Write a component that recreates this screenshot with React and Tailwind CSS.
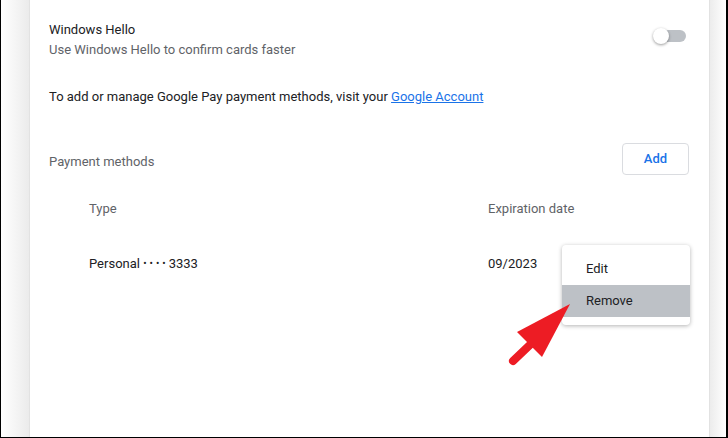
import React from 'react';

const Toggle = () => (
  <div className="relative w-[34px] h-[20px] flex items-center">
    <div className="ml-[3px] w-[30px] h-[12px] rounded-full bg-[#bdc1c6]" />
    <div className="absolute left-0 top-[2px] w-[16px] h-[16px] rounded-full bg-white shadow-[0_1px_3px_rgba(0,0,0,0.4)]" />
  </div>
);

const RowMenu = () => (
  <div className="absolute left-[561px] top-[245px] w-[128px] py-[8px] bg-white rounded-[4px] shadow-[0_1px_4px_rgba(0,0,0,0.3)] text-[13px] text-[#202124]">
    <div className="h-[32px] flex items-center pl-[24px]">Edit</div>
    <div className="h-[32px] flex items-center pl-[24px] bg-[#bdc1c6]">Remove</div>
  </div>
);

const Arrow = () => (
  <svg className="absolute left-0 top-0 pointer-events-none" width="728" height="438">
    <line x1="512" y1="361" x2="533" y2="341" stroke="#ed1c24" strokeWidth="8" strokeLinecap="round" />
    <polygon points="569,304 516,332 541,357" fill="#ed1c24" />
  </svg>
);

export default function App() {
  return (
    <div className="relative w-[728px] h-[438px] overflow-hidden bg-white border-l border-b border-r-2 border-black flex font-['Roboto',sans-serif] text-[13px] text-[#202124]">
      <div className="w-[28px] h-full bg-gradient-to-r from-white to-[#ebebeb]" />
      <div className="w-[681px] h-full bg-white border-l border-r border-[#e2e2e2]">
        <div className="pl-[19px] pr-[20px]">
          <div className="flex items-center justify-between pt-[20px]">
            <div className="leading-[20px]">
              <div>Windows Hello</div>
              <div className="text-[#5f6368]">Use Windows Hello to confirm cards faster</div>
            </div>
            <div className="mr-[2px] mt-[-9px]">
              <Toggle />
            </div>
          </div>
          <div className="mt-[27px] leading-[20px]">
            To add or manage Google Pay payment methods, visit your{' '}
            <a className="text-[#1a73e8] underline">Google Account</a>
          </div>
          <div className="mt-[36px] flex items-center justify-between h-[32px]">
            <div className="text-[#5f6368] mt-[5px]">Payment methods</div>
            <button className="w-[67px] h-[32px] border border-[#dadce0] rounded-[4px] text-[#1a73e8] font-medium bg-white">
              Add
            </button>
          </div>
          <div className="mt-[24px] flex h-[20px] leading-[20px] text-[#5f6368]">
            <div className="pl-[40px] w-[439px]">Type</div>
            <div>Expiration date</div>
          </div>
          <div className="mt-[35px] flex h-[20px] leading-[20px]">
            <div className="pl-[40px] w-[439px]">
              Personal <span className="text-[10px] tracking-[3px] align-[1px]">••••</span>3333
            </div>
            <div>09/2023</div>
          </div>
        </div>
      </div>
      <div className="flex-1 h-full bg-gradient-to-r from-[#ececec] to-white" />
      <RowMenu />
      <Arrow />
    </div>
  );
}
